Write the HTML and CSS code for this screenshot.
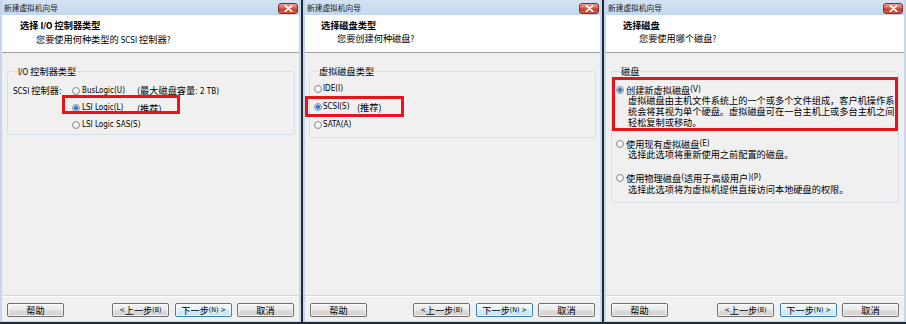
FILE: index.html
```html
<!DOCTYPE html>
<html lang="zh-CN">
<head>
<meta charset="utf-8">
<title>新建虚拟机向导</title>
<link rel="stylesheet" href="styles.css">
</head>
<body>
<div class="screen">
  <section class="win p1">
    <div class="titlebar"><span class="wtitle">新建虚拟机向导</span><span class="close"><svg width="9" height="7" viewBox="0 0 9 7"><path d="M1.5 0.8 L7.5 6.2 M7.5 0.8 L1.5 6.2" stroke="#fff" stroke-width="1.8" stroke-linecap="round"/></svg></span></div>
    <div class="client">
      <div class="head">
        <div class="h1">选择 <span class="en">I/O</span> 控制器类型</div>
        <div class="h2">您要使用何种类型的 <span class="en">SCSI</span> 控制器<span class="en">?</span></div>
      </div>
      <div class="body">
        <div class="group g1">
          <div class="glabel"><span class="en">I/O</span> 控制器类型</div>
          <div class="crow first"><span class="clabel"><span class="en">SCSI</span> 控制器<span class="en">:</span></span><span class="opt"><span class="radio"></span><span class="en">BusLogic(U)</span></span><span class="note">(最大磁盘容量<span class="en">: 2 TB)</span></span></div>
          <div class="crow"><span class="clabel"></span><span class="opt"><span class="radio on"></span><span class="en">LSI Logic(L)</span></span><span class="note">(推荐)</span></div>
          <div class="crow"><span class="clabel"></span><span class="opt"><span class="radio"></span><span class="en">LSI Logic SAS(S)</span></span></div>
        </div>
        <div class="mark m1"></div>
      </div>
      <div class="foot">
        <span class="btn">帮助</span>
        <span class="fill"></span>
        <span class="btn prev"><span class="en">&lt;</span> 上一步<span class="en">(B)</span></span>
        <span class="btn next def">下一步<span class="en">(N) &gt;</span></span>
        <span class="btn cancel">取消</span>
      </div>
    </div>
  </section>

  <section class="win p2">
    <div class="titlebar"><span class="wtitle">新建虚拟机向导</span><span class="close"><svg width="9" height="7" viewBox="0 0 9 7"><path d="M1.5 0.8 L7.5 6.2 M7.5 0.8 L1.5 6.2" stroke="#fff" stroke-width="1.8" stroke-linecap="round"/></svg></span></div>
    <div class="client">
      <div class="head">
        <div class="h1">选择磁盘类型</div>
        <div class="h2">您要创建何种磁盘<span class="en">?</span></div>
      </div>
      <div class="body">
        <div class="group g2">
          <div class="glabel">虚拟磁盘类型</div>
          <div class="drow first"><span class="radio"></span><span class="en dname">IDE(I)</span></div>
          <div class="drow"><span class="radio on"></span><span class="en dname">SCSI(S)</span><span class="note">(推荐)</span></div>
          <div class="drow"><span class="radio"></span><span class="en dname">SATA(A)</span></div>
        </div>
        <div class="mark m2"></div>
      </div>
      <div class="foot">
        <span class="btn">帮助</span>
        <span class="fill"></span>
        <span class="btn prev"><span class="en">&lt;</span> 上一步<span class="en">(B)</span></span>
        <span class="btn next def">下一步<span class="en">(N) &gt;</span></span>
        <span class="btn cancel">取消</span>
      </div>
    </div>
  </section>

  <section class="win p3">
    <div class="titlebar"><span class="wtitle">新建虚拟机向导</span><span class="close"><svg width="9" height="7" viewBox="0 0 9 7"><path d="M1.5 0.8 L7.5 6.2 M7.5 0.8 L1.5 6.2" stroke="#fff" stroke-width="1.8" stroke-linecap="round"/></svg></span></div>
    <div class="client">
      <div class="head">
        <div class="h1">选择磁盘</div>
        <div class="h2">您要使用哪个磁盘<span class="en">?</span></div>
      </div>
      <div class="body">
        <div class="group g3">
          <div class="glabel">磁盘</div>
          <div class="orow o1"><span class="radio on"></span>创建新虚拟磁盘<span class="en">(V)</span></div>
          <div class="desc d1">虚拟磁盘由主机文件系统上的一个或多个文件组成，客户机操作系<br>统会将其视为单个硬盘。虚拟磁盘可在一台主机上或多台主机之间<br>轻松复制或移动。</div>
          <div class="orow o2"><span class="radio"></span>使用现有虚拟磁盘<span class="en">(E)</span></div>
          <div class="desc d2">选择此选项将重新使用之前配置的磁盘。</div>
          <div class="orow o3"><span class="radio"></span>使用物理磁盘<span class="en">(</span>适用于高级用户<span class="en">)(P)</span></div>
          <div class="desc d3">选择此选项将为虚拟机提供直接访问本地硬盘的权限。</div>
        </div>
        <div class="mark m3"></div>
      </div>
      <div class="foot">
        <span class="btn">帮助</span>
        <span class="fill"></span>
        <span class="btn prev"><span class="en">&lt;</span> 上一步<span class="en">(B)</span></span>
        <span class="btn next def">下一步<span class="en">(N) &gt;</span></span>
        <span class="btn cancel">取消</span>
      </div>
    </div>
  </section>
</div>
</body>
</html>
```

FILE: styles.css
```css
* { box-sizing: border-box; margin: 0; padding: 0; }
html, body { width: 906px; height: 324px; overflow: hidden; }
body {
  background: #1c2a3a;
  font-family: "Noto Sans CJK SC", "Liberation Sans", sans-serif;
  font-size: 9.2px;
  line-height: 12px;
  color: #000;
}
.en {
  font-family: "DejaVu Sans", "Liberation Sans", sans-serif;
  font-stretch: condensed;
  font-size: 8px;
}
.screen {
  display: grid;
  grid-template-columns: 301px 299px 302px;
  column-gap: 2px;
  height: 322px;
}
.win {
  display: flex;
  flex-direction: column;
  background: #c4d7ec;
  padding: 0 2px 1px;
}
.titlebar {
  height: 15px;
  display: flex;
  align-items: center;
  justify-content: space-between;
  padding: 0 1px 0 2px;
  background: linear-gradient(#d4e3f3, #c3d7ed);
}
.wtitle { font-size: 7.7px; color: #222; line-height: 10px; }
.close {
  width: 20px;
  height: 11px;
  margin-top: 1px;
  border: 1px solid #7e2e24;
  border-radius: 3px;
  background: linear-gradient(#eaa393, #d46a55 45%, #c2412b 55%, #d0603f);
  display: flex;
  align-items: center;
  justify-content: center;
}
.client {
  flex: 1;
  display: flex;
  flex-direction: column;
  background: #f0f0f0;
}
.head {
  height: 38px;
  background: #fff;
  border-bottom: 1px solid #a0a0a0;
  padding: 4px 0 0 18px;
}
.p2 .head { padding-left: 16px; }
.p3 .head { padding-left: 17px; }
.h1 { font-weight: bold; line-height: 13px; }
.h1 .en { font-size: 8.4px; }
.h2 { padding-left: 16px; line-height: 13px; }
.body { flex: 1; position: relative; }
.group {
  border: 1px solid #d5dfe5;
  border-radius: 3px;
  margin: 18px 4px 0 5px;
}
.glabel {
  width: max-content;
  margin: -7px 0 0 4px;
  padding: 0 1px;
  background: #f0f0f0;
  line-height: 12px;
}
.g1 { padding: 0 0 1px 5px; }
.crow {
  display: grid;
  grid-template-columns: 59px 65px auto;
  height: 17px;
  align-items: center;
  white-space: nowrap;
}
.crow.first, .drow.first { margin-top: 3px; }
.opt { display: flex; align-items: center; white-space: nowrap; }
.radio {
  display: inline-block;
  flex: none;
  width: 8px;
  height: 8px;
  border-radius: 50%;
  border: 1px solid #8d8f91;
  background: radial-gradient(circle at 50% 40%, #fff, #dcdcdc);
  margin-right: 2px;
}
.radio.on {
  background: radial-gradient(circle, #2b69b8 0, #3d7fcf 1.6px, #9cc0ea 2.4px, #f4f4f4 3px);
}
.g2 { margin-left: 4px; margin-right: 4px; padding: 0 0 4px 4px; height: 67px; }
.drow { display: flex; align-items: center; height: 18px; white-space: nowrap; }
.drow .radio { margin-right: 1px; }
.dname { display: inline-block; width: 34px; }
.g3 { margin-left: 5px; margin-right: 5px; padding: 0 0 6px 4px; height: 132px; }
.orow { display: flex; align-items: center; height: 11px; white-space: nowrap; }
.orow .radio { margin-right: 2px; }
.o1 { margin-top: 7px; }
.o2 { margin-top: 10px; }
.o3 { margin-top: 12px; }
.desc { padding-left: 12px; line-height: 11px; white-space: nowrap; }
.d1 { margin-top: 0; }
.d3 { margin-top: 1px; }
.mark {
  position: absolute;
  border: 3px solid #e8141c;
}
.m1 { left: 60px; top: 42px; width: 118px; height: 19px; }
.m2 { left: 0; top: 43px; width: 99px; height: 21px; }
.m3 { left: 6px; top: 24px; width: 286px; height: 54px; }
.foot {
  height: 26px;
  border-top: 1px solid #d8d8d8;
  box-shadow: inset 0 1px 0 #fff;
  display: flex;
  align-items: flex-start;
  padding: 7px 5px 0;
}
.fill { flex: 1; }
.btn {
  width: 57px;
  height: 14px;
  border: 1px solid #707070;
  border-radius: 2px;
  background: linear-gradient(#f3f3f3, #ebebeb 45%, #dddddd 55%, #cfcfcf);
  display: flex;
  align-items: center;
  justify-content: center;
  line-height: 12px;
  box-shadow: inset 0 0 0 1px rgba(255,255,255,0.7);
  white-space: nowrap;
}
.btn .en { font-size: 7px; }
.next { margin-left: 6px; }
.cancel { margin-left: 5px; }
.def {
  border-color: #3c7fb1;
  background: linear-gradient(#f4fafd, #e4f3fc 45%, #d2ebfa 55%, #c6e4f7);
}
```
